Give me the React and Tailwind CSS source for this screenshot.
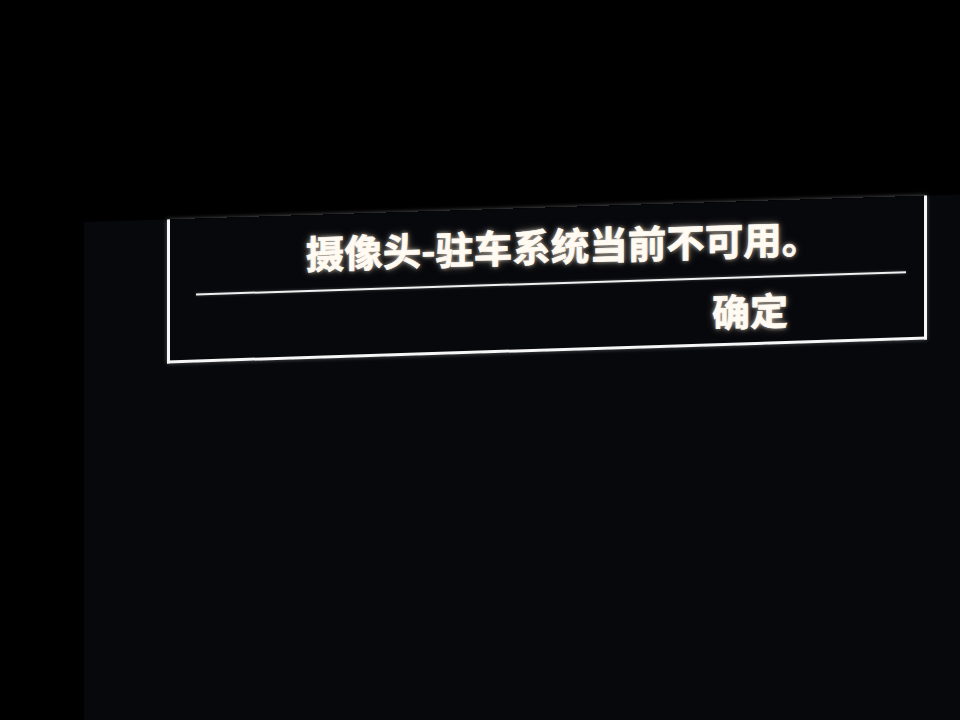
export default function App() {
  const glow = '[text-shadow:0_0_4px_rgba(255,244,225,0.75),0_0_10px_rgba(255,235,210,0.35)] [-webkit-text-stroke:0.7px_#fffaf2]';
  return (
    <div className="w-[960px] h-[720px] bg-black overflow-hidden">
      <div className="ml-[84px] mt-[222px] w-[920px] h-[560px] bg-[#07080c] -skew-y-[1.8deg] origin-top-left">
        <div className="ml-[83px] w-[760px] h-[144px] flex flex-col border-l-[3px] border-r-[3px] border-b-[3px] border-[#f6f6f6] shadow-[0_0_4px_rgba(255,255,255,0.35)]">
          <div
            className={`h-[75px] flex items-center justify-center pl-[32px] text-[38.5px] leading-none font-bold text-[#fffaf2] ${glow}`}
            style={{ fontFamily: '"Noto Sans CJK SC", "Noto Sans", sans-serif' }}
          >
            摄像头-驻车系统当前不可用。
          </div>
          <div className="ml-[26px] mr-[18px] h-[2px] bg-[#f0f0f0] shadow-[0_0_3px_rgba(255,255,255,0.3)]" />
          <div
            className={`flex-1 flex items-center justify-end pr-[136px] text-[38px] leading-none font-bold text-[#fffaf2] ${glow}`}
            style={{ fontFamily: '"Noto Sans CJK SC", "Noto Sans", sans-serif' }}
          >
            确定
          </div>
        </div>
      </div>
    </div>
  );
}
